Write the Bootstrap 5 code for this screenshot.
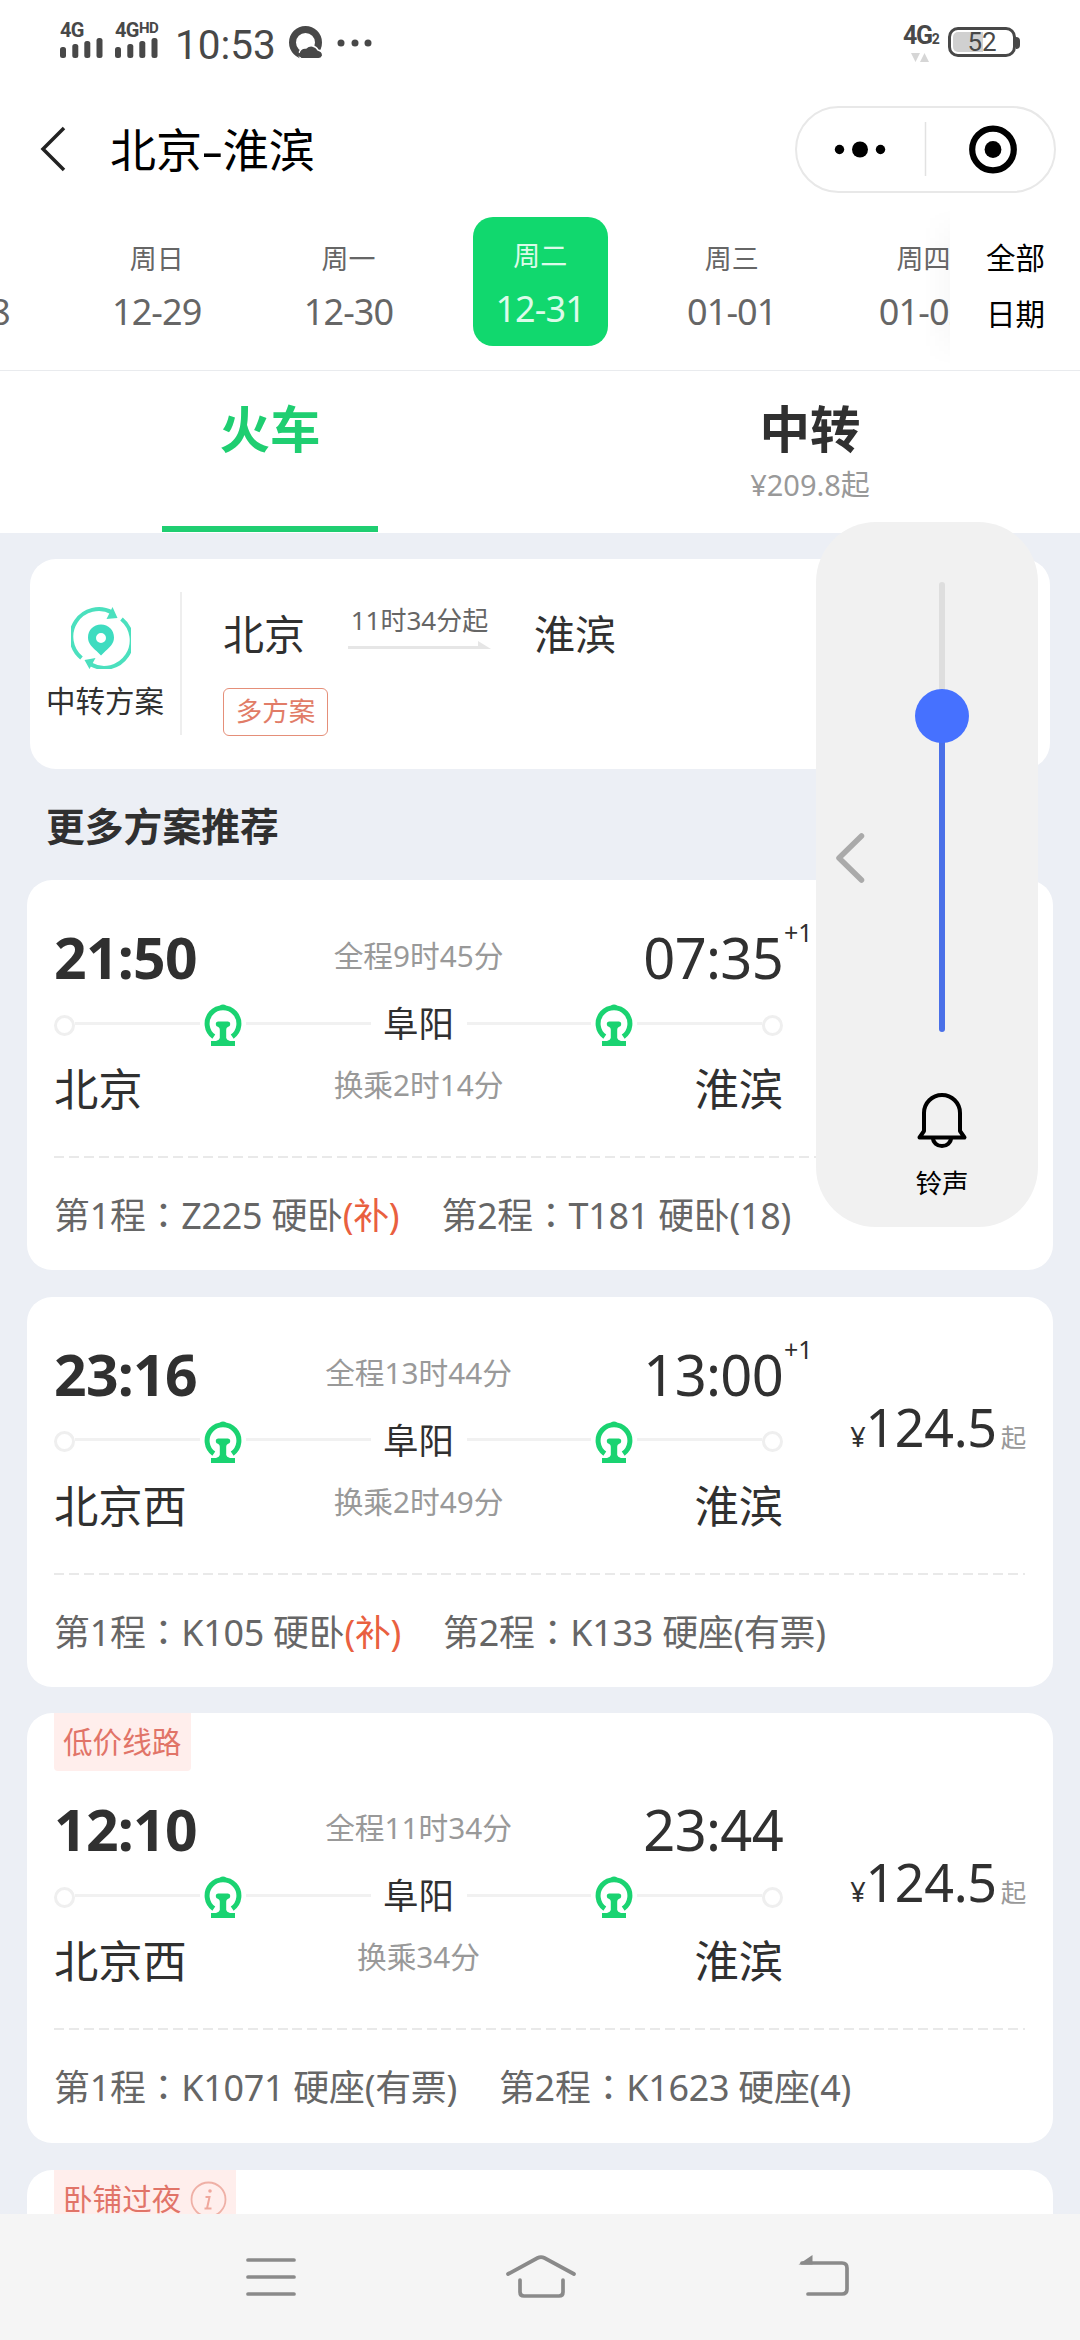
<!DOCTYPE html>
<html lang="zh-CN">
<head>
<meta charset="utf-8">
<meta name="viewport" content="width=device-width, initial-scale=1">
<title>北京-淮滨</title>
<link href="https://cdn.jsdelivr.net/npm/bootstrap@5.3.0/dist/css/bootstrap.min.css" rel="stylesheet">
<style>
  body{font-family:"Noto Sans","Noto Sans CJK SC",sans-serif;height:2340px;background:#eceff5;color:#303030;overflow:hidden;line-height:1}
  svg{display:block;flex:none}
  .screen{height:2214px;overflow:hidden}
  .statusbar{height:84px;padding:0 60px;color:#484848;font-family:Roboto,sans-serif}
  .sig{height:36px;font-weight:700;font-size:20px;line-height:18px;letter-spacing:-.6px}
  .sig sup{font-size:15px;top:-4px;line-height:0}
  .clock{font-size:40.5px;line-height:46px}
  .batt{width:68px;height:30px;border:3px solid #484848;border-radius:10px;padding:2px;position:relative;font-size:26px;line-height:21px}
  .batt .level{position:absolute;left:2px;top:2px;bottom:2px;width:30px;background:#d0d0d0;border-radius:5px 0 0 5px}
  .batt .nub{position:absolute;right:-7px;top:7px;width:4px;height:12px;background:#484848;border-radius:0 4px 4px 0}
  .titlebar{height:116px;padding:14px 24px 0 40px}
  .titlebar h1{font-size:46px;line-height:60px;margin:0 0 0 42px;color:#000;font-weight:400}
  .dash{display:inline-block;transform:scaleX(1.5);padding:0 3px}
  .capsule{width:261px;height:87px;border:2px solid #e8e8e8;border-radius:44px}
  .dates{height:171px;border-bottom:1px solid #e9ebee}
  .strip{width:950px;overflow:hidden;position:relative}
  .strip::after{content:"";position:absolute;right:0;top:8px;bottom:4px;width:26px;background:linear-gradient(90deg,rgba(0,0,0,0),rgba(0,0,0,.025));-webkit-mask-image:linear-gradient(transparent,#000 25%,#000 75%,transparent)}
  .strip-in{margin-left:-131px;height:170px}
  .day{width:191.8px;flex:none;padding-top:39px;color:#666;text-align:center;font-size:27px;line-height:40px}
  .day b{display:block;font-weight:400;font-size:36px;line-height:40px;margin-top:13px;letter-spacing:-.9px}
  .day-on{width:135px;margin:17px 28.25px 0;height:129px;padding-top:19px;border-radius:20px;background:#11d86e;color:#dcfbe9}
  .alldates{flex:1;color:#000;font-size:29.5px;line-height:56px;padding:30px 0 0 36px}
  .tabs{height:162px;background:#fff}
  .tabs .tab{flex:1;position:relative;text-align:center;padding-top:28px;font-size:50.5px;line-height:60px;font-weight:700}
  .tabs .tab-sub{font-size:29px;line-height:34px;font-weight:400;color:#999;margin-top:9px}
  .tab-on{color:#1fce71}
  .tab-on .bar{width:216px;height:6px;background:#1fce71;margin:67px auto 0}
  .plan{margin:26px 30px 0;height:210px;border-radius:26px;background:#fff;padding-top:33px}
  .plan-side{width:152px;height:143px;border-right:2px solid #eee;padding-top:15px;font-size:29.5px;line-height:36px}
  .plan-main{padding-left:41px}
  .city{font-size:41px;line-height:50px}
  .dur{width:143px;margin:-4px 43px 0 43px;font-size:26px;line-height:30px;color:#666;text-align:center}
  .multi{border:1.5px solid #e58f79;border-radius:6px;width:105px;height:48px;line-height:45px;font-size:26.5px;color:#e17c67;text-align:center;margin-top:29px}
  .sect{font-size:38.8px;line-height:60px;font-weight:700;margin:27px 46px 24px}
  .trip{margin:0 27px 26.5px;background:#fff;border-radius:25px;height:390px;padding:37px 27px 0;flex:none}
  .trip-tagged{height:430px;padding-top:0}
  .tagrow{height:76px}
  .ribbon{height:57.5px;background:#ffeeec;border-radius:0 0 4px 4px;color:#e17468;font-size:29.6px;line-height:57px;padding:0 10px 0 9px}
  .journey{width:729px}
  .cols{display:grid;grid-template-columns:1fr auto 1fr;align-items:center}
  .t-row{height:80px}.s-row{height:50px;margin-top:15px;font-size:44.3px;line-height:50px}
  .dep{font-size:57px;font-weight:700;line-height:80px;letter-spacing:-.7px}
  .arr{font-size:56px;line-height:80px;position:relative;text-align:right;letter-spacing:-.7px}
  .nextday{position:absolute;left:100%;top:-5px;padding-left:1px;font-size:25px;line-height:40px;letter-spacing:0}
  .mid{font-size:29.7px;color:#999;line-height:36px;padding-bottom:2px}
  .route{height:52px;font-size:35.5px;line-height:50px;padding-top:0}
  .ring{width:21px;height:21px;border:3px solid #efefef;border-radius:50%;margin-top:4px;flex:none}
  .rail{flex:1;height:3px;background:#f1f1f1}
  .slot{width:46px;flex:none;padding-top:5px}.via{width:96px;text-align:center;flex:none}
  .fare{padding-top:63px;line-height:60px;text-align:right;flex:1;white-space:nowrap;font-size:52px;letter-spacing:-.3px}
  .fare i{font-style:normal;font-size:27px}.fare u{text-decoration:none;font-size:25.5px;color:#999;margin-left:4px}
  .dashes{height:2px;width:971px;margin-top:42px;background:repeating-linear-gradient(90deg,#e9e9e9 0 10px,transparent 10px 14.9px)}
  .legs{font-size:35.9px;line-height:50px;margin-top:30px;color:#666;white-space:nowrap;letter-spacing:-.25px}
  .legs span+span{margin-left:42px}
  .legs em{font-style:normal;color:#e9603f}
  .legs q{quotes:none;font-family:"Noto Sans CJK TC",sans-serif}
  .sysnav{height:126px;background:#f5f5f5}
  .volume{position:absolute;left:816px;top:522px;width:222px;height:705px;border-radius:60px;background:#f1f1f1;color:#000;font-size:26.5px}
  .volume .vlabel{position:absolute;left:15px;right:0;margin-left:15px;top:641px;line-height:40px;text-align:center}
</style>
</head>
<body class="d-flex flex-column position-relative">
<svg width="0" height="0" class="position-absolute">
  <symbol id="train" viewBox="0 0 38 43">
    <path d="M9.800 32.600A15.900 15.900 0 1 1 28.200 32.600" fill="none" stroke="#1ad371" stroke-width="5"/>
    <path d="M14.500 4q1-3.500 4.500-3.500T23.500 4zM14 17.500h10q2.300 0 2.300 2.500t-2.500 3q-1.600.5-1.600 2.800V34q.3 2 3.800 3h5v5H7v-5h5q3.500-1 3.800-3v-8.200q0-2.300-1.600-2.800Q11.700 22.500 11.700 20t2.300-2.500z" fill="#1ad371"/>
  </symbol>
  <symbol id="bars" viewBox="0 0 43 20">
    <g fill="#484848"><rect x="0" y="9" width="6" height="11" rx="2.500"/><rect x="12.300" y="6" width="6" height="14" rx="2.500"/><rect x="24.300" y="3" width="6" height="17" rx="2.500"/><rect x="36.500" y="0" width="6" height="20" rx="2.500"/></g>
  </symbol>
</svg>

<div class="screen d-flex flex-column flex-shrink-0">
<header class="bg-white flex-shrink-0">
  <div class="statusbar d-flex align-items-start">
    <div style="width:55px;padding-top:21px"><div class="sig" style="height:17px">4G</div><svg width="43" height="20"><use href="#bars"/></svg></div>
    <div style="width:60px;padding-top:21px"><div class="sig" style="height:17px">4G<sup>HD</sup></div><svg width="43" height="20"><use href="#bars"/></svg></div>
    <div class="clock" style="padding-top:22px;width:113px">10:53</div>
    <svg width="90" height="34" viewBox="0 0 90 34" style="margin-top:25px">
      <circle cx="17.500" cy="17.500" r="13" fill="none" stroke="#484848" stroke-width="7"/>
      <path d="M13 33.500a6 6 0 0 1 0-9q2-2 5-1.500a7.500 7.500 0 0 1 12 2q5.500 1.500 4.500 6-1 2.800-4 2.800z" fill="#484848" stroke="#fff" stroke-width="1.500"/>
      <path d="M12 32q-4-2-2.500-5l4 2 2 4z" fill="#484848"/>
      <g fill="#484848"><circle cx="53" cy="18" r="3.500"/><circle cx="67" cy="18" r="3.500"/><circle cx="80" cy="18" r="3.500"/></g>
    </svg>
    <div class="ms-auto fw-bold" style="margin-top:22px;font-size:25px;line-height:27px;letter-spacing:-1.300px;width:45px">4G<span style="font-size:14px">2</span>
      <svg width="18" height="10" viewBox="0 0 18 10" style="margin-left:8px"><path d="M0 0h9L4.500 9zM9 9h9L13.500 0z" fill="#d6d6d6"/></svg></div>
    <div class="batt text-center" style="margin-top:27px;margin-right:4px"><div class="level"></div><div class="nub"></div><span class="position-relative">52</span></div>
  </div>
  <div class="titlebar d-flex align-items-center">
    <svg width="28" height="48" viewBox="0 0 28 48"><path d="M24 3 3 24l21 21" fill="none" stroke="#222" stroke-width="3.500"/></svg>
    <h1>北京<span class="dash">-</span>淮滨</h1>
    <div class="capsule ms-auto d-flex align-items-center">
      <svg width="257" height="83" viewBox="0 0 257 83"><circle cx="42.500" cy="41.500" r="4.700"/><circle cx="63" cy="41.500" r="8"/><circle cx="83.500" cy="41.500" r="4.700"/><path d="M128.500 14v54" stroke="#e2e2e2" stroke-width="1.500"/><circle cx="196" cy="41.500" r="20.800" fill="none" stroke="#000" stroke-width="6.200"/><circle cx="196" cy="41.500" r="8.400"/></svg>
    </div>
  </div>
  <div class="dates d-flex">
    <div class="strip"><div class="strip-in d-flex">
      <div class="day">周六<b>12-28</b></div><div class="day">周日<b>12-29</b></div><div class="day">周一<b>12-30</b></div>
      <div class="day day-on">周二<b>12-31</b></div><div class="day">周三<b>01-01</b></div><div class="day">周四<b>01-02</b></div>
    </div></div>
    <div class="alldates">全部<br>日期</div>
  </div>
</header>

<nav class="tabs d-flex flex-shrink-0">
  <div class="tab tab-on">火车<div class="bar"></div></div>
  <div class="tab">中转<div class="tab-sub">¥209.8起</div></div>
</nav>

<section class="plan d-flex flex-shrink-0">
  <div class="plan-side d-flex flex-column align-items-center">
    <svg width="60" height="62" viewBox="0 0 60 62" style="margin-left:-8px">
      <g fill="none" stroke="#4be0be" stroke-width="4"><path d="M10.500 51A27.500 27.500 0 0 1 41 5.500"/><path d="M50.500 12A27.500 27.500 0 0 1 20 57.500"/></g>
      <path d="M41.500 0 46.500 11l-11 1zM18.500 62 13.500 53l11-2z" fill="#4be0be"/>
      <path fill-rule="evenodd" d="M30 17.500c7.500 0 13 5.500 13 13 0 6-4.500 10-8.500 13.500L30 48.500 25.500 44C21.500 40.500 17 36.500 17 30.500c0-7.500 5.500-13 13-13zm0 8.500a5 5 0 1 0 0 10 5 5 0 0 0 0-10z" fill="#3edcc0"/>
    </svg>
    <div style="margin-top:14px">中转方案</div>
  </div>
  <div class="plan-main">
    <div class="d-flex" style="padding-top:17px">
      <div class="city">北京</div>
      <div class="dur"><div class="text-nowrap">11时34分起</div><svg width="143" height="9" viewBox="0 0 143 9" style="margin-top:6px"><path d="M0 5h130V0l13 8H0z" fill="#e6e6e6"/></svg></div>
      <div class="city">淮滨</div>
    </div>
    <div class="multi">多方案</div>
  </div>
</section>

<h2 class="sect flex-shrink-0">更多方案推荐</h2>

<article class="trip">
  <div class="d-flex"><div class="journey">
    <div class="cols t-row"><div class="dep">21:50</div><div class="mid">全程9时45分</div><div class="arr">07:35<span class="nextday">+1</span></div></div>
    <div class="route d-flex align-items-center"><div class="ring"></div><div class="rail"></div><div class="slot"><svg class="mx-auto" width="38" height="43"><use href="#train"/></svg></div><div class="rail"></div><div class="via">阜阳</div><div class="rail"></div><div class="slot"><svg class="mx-auto" width="38" height="43"><use href="#train"/></svg></div><div class="rail"></div><div class="ring"></div></div>
    <div class="cols s-row"><div>北京</div><div class="mid pb-2">换乘2时14分</div><div class="text-end">淮滨</div></div>
  </div></div>
  <div class="dashes"></div>
  <div class="legs"><span>第1程<q lang="zh-TW">：</q>Z225 硬卧<em>(补)</em></span><span>第2程<q lang="zh-TW">：</q>T181 硬卧(18)</span></div>
</article>

<article class="trip">
  <div class="d-flex"><div class="journey">
    <div class="cols t-row"><div class="dep">23:16</div><div class="mid">全程13时44分</div><div class="arr">13:00<span class="nextday">+1</span></div></div>
    <div class="route d-flex align-items-center"><div class="ring"></div><div class="rail"></div><div class="slot"><svg class="mx-auto" width="38" height="43"><use href="#train"/></svg></div><div class="rail"></div><div class="via">阜阳</div><div class="rail"></div><div class="slot"><svg class="mx-auto" width="38" height="43"><use href="#train"/></svg></div><div class="rail"></div><div class="ring"></div></div>
    <div class="cols s-row"><div>北京西</div><div class="mid pb-2">换乘2时49分</div><div class="text-end">淮滨</div></div>
  </div><div class="fare"><i>¥</i>124.5<u>起</u></div></div>
  <div class="dashes"></div>
  <div class="legs"><span>第1程<q lang="zh-TW">：</q>K105 硬卧<em>(补)</em></span><span>第2程<q lang="zh-TW">：</q>K133 硬座(有票)</span></div>
</article>

<article class="trip trip-tagged">
  <div class="tagrow d-flex align-items-start"><div class="ribbon">低价线路</div></div>
  <div class="d-flex"><div class="journey">
    <div class="cols t-row"><div class="dep">12:10</div><div class="mid">全程11时34分</div><div class="arr">23:44</div></div>
    <div class="route d-flex align-items-center"><div class="ring"></div><div class="rail"></div><div class="slot"><svg class="mx-auto" width="38" height="43"><use href="#train"/></svg></div><div class="rail"></div><div class="via">阜阳</div><div class="rail"></div><div class="slot"><svg class="mx-auto" width="38" height="43"><use href="#train"/></svg></div><div class="rail"></div><div class="ring"></div></div>
    <div class="cols s-row"><div>北京西</div><div class="mid pb-2">换乘34分</div><div class="text-end">淮滨</div></div>
  </div><div class="fare"><i>¥</i>124.5<u>起</u></div></div>
  <div class="dashes"></div>
  <div class="legs"><span>第1程<q lang="zh-TW">：</q>K1071 硬座(有票)</span><span>第2程<q lang="zh-TW">：</q>K1623 硬座(4)</span></div>
</article>

<article class="trip trip-tagged mb-0">
  <div class="tagrow d-flex align-items-start"><div class="ribbon d-flex align-items-center" style="padding-right:9px">卧铺过夜
    <svg width="37" height="37" viewBox="0 0 37 37" style="margin:2px 0 0 9px"><circle cx="18.500" cy="18.500" r="17" fill="none" stroke="#efb0a6" stroke-width="1.800"/><circle cx="20" cy="10" r="1.800" fill="#efa79c"/><path d="M15.500 16h4l-2.500 11.500h4.500M14.500 27.500h3" fill="none" stroke="#efa79c" stroke-width="2"/></svg></div></div>
</article>
</div>

<footer class="sysnav flex-shrink-0">
  <svg width="1080" height="126" viewBox="0 0 1080 126" fill="none" stroke="#8a8a8a" stroke-width="3.700" stroke-linecap="round" stroke-linejoin="round">
    <path d="M248 46h46M248 63h46M248 80h46"/>
    <path d="M508 60l29.500-16q3.500-1.800 7 0L574 60M520 66v12q0 4 4 4h35q4 0 4-4V66"/>
    <path d="M802 49h40q5 0 5 5v21q0 5-5 5h-34"/><path d="M798.500 50.500 812.500 41v9.500z" fill="#8a8a8a" stroke="none"/>
  </svg>
</footer>

<aside class="volume">
  <svg width="222" height="705" viewBox="0 0 222 705">
    <path d="M126 63v140" stroke="#dedede" stroke-width="6" stroke-linecap="round"/>
    <path d="M126 200v307" stroke="#4a70e8" stroke-width="6" stroke-linecap="round"/>
    <circle cx="126" cy="194" r="27" fill="#4671ff"/>
    <path d="M45.500 314 23 336l22.500 22" fill="none" stroke="#aaa" stroke-width="5.500" stroke-linecap="round" stroke-linejoin="round"/>
    <g fill="none" stroke="#000" stroke-width="4" stroke-linejoin="round"><path d="M108 609v-18a18 18 0 0 1 36 0v18l4.500 6.500h-45z"/><path d="M117 616a9 8 0 0 0 18 0"/></g>
  </svg>
  <div class="vlabel">铃声</div>
</aside>
<script src="https://cdn.jsdelivr.net/npm/bootstrap@5.3.0/dist/js/bootstrap.bundle.min.js"></script>
</body>
</html>
